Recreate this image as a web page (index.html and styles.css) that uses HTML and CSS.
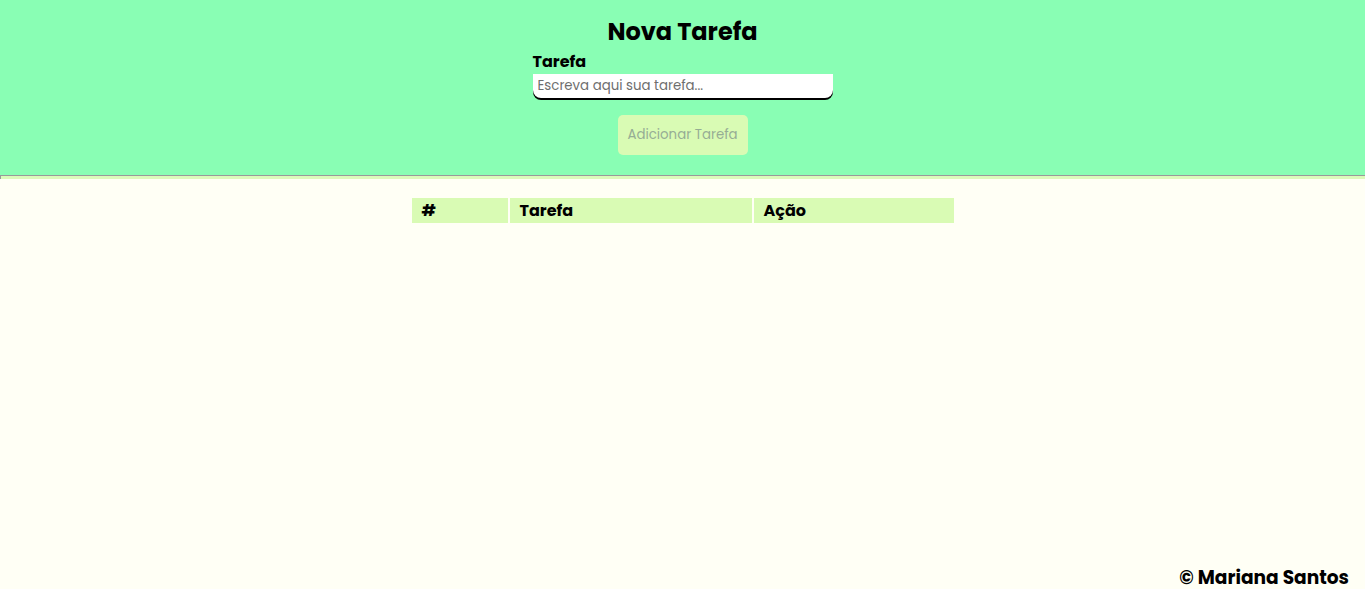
FILE: index.html
```html
<!DOCTYPE html>
<html lang="pt-BR">
<head>
<meta charset="utf-8">
<title>Nova Tarefa</title>
<link rel="stylesheet" href="styles.css">
</head>
<body>
<header class="topo">
  <h1 class="titulo">Nova Tarefa</h1>
  <form class="form">
    <label class="rotulo" for="tarefa">Tarefa</label>
    <input class="campo" id="tarefa" type="text" placeholder="Escreva aqui sua tarefa...">
    <button class="botao" type="button" disabled>Adicionar Tarefa</button>
  </form>
</header>
<div class="faixa"></div>
<main class="conteudo">
  <table class="tabela">
    <thead>
      <tr>
        <th class="col-id">#</th>
        <th class="col-tarefa">Tarefa</th>
        <th class="col-acao">Ação</th>
      </tr>
    </thead>
    <tbody></tbody>
  </table>
</main>
<footer class="rodape">© Mariana Santos</footer>
</body>
</html>
```
FILE: styles.css
```css
* { box-sizing: border-box; }
html, body { height: 100%; }
body {
  margin: 0;
  background: #fffff5;
  font-family: "Poppins", "Open Sans", "Noto Sans", sans-serif;
  color: #000;
  display: flex;
  flex-direction: column;
}
.topo {
  background: #89feb4;
  border-bottom: 1px solid #9a9a9a;
  padding-top: 17px;
  height: 176px;
  display: flex;
  flex-direction: column;
  align-items: center;
}
.titulo {
  margin: 0;
  font-size: 24px;
  font-weight: 700;
  line-height: 30px;
}
.form {
  width: 300px;
  display: flex;
  flex-direction: column;
  align-items: stretch;
  margin-top: 6px;
}
.rotulo {
  font-size: 16px;
  font-weight: 700;
  line-height: 18px;
}
.campo {
  margin-top: 3px;
  height: 24px;
  border: none;
  border-radius: 0 0 8px 8px;
  box-shadow: 0 2px 0 #000;
  padding: 0 5px;
  font-family: inherit;
  font-size: 13.33px;
  background: #fff;
  outline: none;
}
.campo::placeholder { color: #6e6e6e; }
.botao {
  align-self: center;
  margin-top: 17px;
  width: 130px;
  height: 40px;
  border: none;
  border-radius: 5px;
  background: #d9fbb4;
  color: #96ad94;
  font-family: inherit;
  font-size: 13.33px;
}
.faixa {
  height: 3px;
  background: #dcfbbb;
  border-left: 1px solid #9a9a9a;
}
.conteudo {
  flex: 1;
  display: flex;
  justify-content: center;
  padding-top: 17px;
}
.tabela {
  border-spacing: 2px;
  width: 546px;
  align-self: flex-start;
}
.tabela th {
  background: #d9fbb4;
  text-align: left;
  font-size: 16px;
  font-weight: 700;
  height: 25px;
  padding: 0 10px;
  line-height: 25px;
}
.col-id { width: 96px; }
.col-tarefa { width: 242px; }
.col-acao { width: 200px; }
.rodape {
  text-align: right;
  font-size: 18.6px;
  font-weight: 700;
  padding: 0 16px 0 0;
  line-height: 22px;
  height: 22px;
  margin-bottom: 0;
}
```
